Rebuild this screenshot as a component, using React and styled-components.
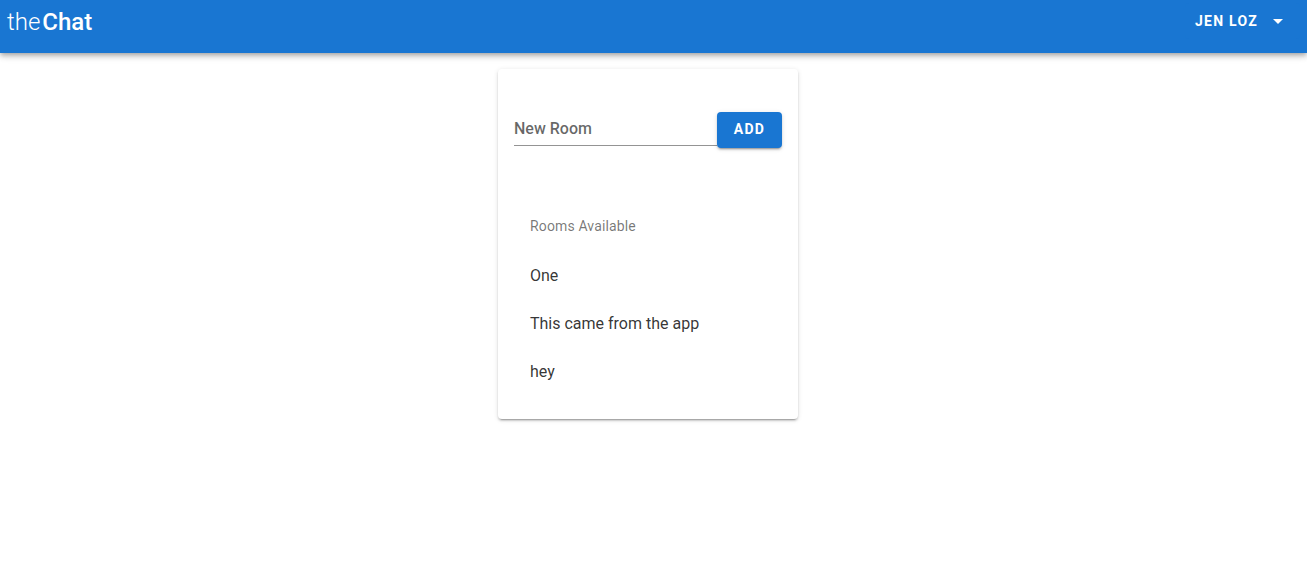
import React, { useState } from "react";
import styled, { createGlobalStyle } from "styled-components";

const GlobalStyle = createGlobalStyle`
  *, *::before, *::after { box-sizing: border-box; }
  body {
    margin: 0;
    background: #fff;
    color: rgba(0, 0, 0, 0.8);
    font: 400 16px/24px Roboto, "Liberation Sans", sans-serif;
  }
  button, input { font-family: inherit; }
`;

const raised = `
  box-shadow: 0 3px 1px -2px rgba(0, 0, 0, 0.2), 0 2px 2px rgba(0, 0, 0, 0.14),
    0 1px 5px rgba(0, 0, 0, 0.12);
`;

const AppBar = styled.header`
  display: flex;
  justify-content: space-between;
  align-items: flex-start;
  height: 53px;
  padding: 4px 7px;
  background: #1976d2;
  color: #fff;
  box-shadow: 0 2px 4px -1px rgba(0, 0, 0, 0.2), 0 4px 5px rgba(0, 0, 0, 0.14),
    0 1px 10px rgba(0, 0, 0, 0.12);
`;

const Brand = styled.a`
  display: flex;
  gap: 2px;
  color: inherit;
  text-decoration: none;
  font-size: 24px;
  line-height: 36px;
`;

const BrandPart = styled.span`
  font-weight: ${({ $strong }) => ($strong ? 500 : 300)};
`;

const Button = styled.button`
  display: inline-flex;
  align-items: center;
  justify-content: center;
  height: 36px;
  padding: 0 16px;
  border: 0;
  border-radius: 4px;
  background: #1976d2;
  color: #fff;
  font-size: 14px;
  font-weight: 700;
  line-height: 18px;
  letter-spacing: 0.09em;
  text-transform: uppercase;
  cursor: pointer;
`;

const UserButton = styled(Button)`
  gap: 8px;
  padding: 0 10px;
  margin-top: -1px;
`;

const AddButton = styled(Button)`
  min-width: 65px;
  padding-bottom: 2px;
  ${raised}
`;

const Main = styled.main`
  display: flex;
  justify-content: center;
  padding: 16px 11px 16px 0;
`;

const Card = styled.section`
  width: 300px;
  padding: 43px 16px 23px;
  border-radius: 4px;
  background: #fff;
  ${raised}
`;

const RoomForm = styled.form`
  display: flex;
  align-items: flex-start;
`;

const RoomInput = styled.input`
  flex: 1;
  min-width: 0;
  height: 34px;
  padding: 0;
  border: 0;
  border-bottom: 1px solid #949494;
  border-radius: 0;
  background: transparent;
  color: inherit;
  font-size: 16px;
  font-weight: 500;
  outline: 0;
  &::placeholder { color: rgba(0, 0, 0, 0.6); opacity: 1; }
`;

const Rooms = styled.div`
  padding: 54px 16px 0;
`;

const Subheader = styled.h2`
  margin: 0 0 2px;
  color: rgba(0, 0, 0, 0.54);
  font-size: 14px;
  font-weight: 400;
  line-height: 48px;
  letter-spacing: 0.01em;
`;

const RoomList = styled.ul`
  margin: 0;
  padding: 0;
  list-style: none;
`;

const RoomLink = styled.a`
  display: block;
  color: inherit;
  text-decoration: none;
  line-height: 48px;
`;

export default function App() {
  const [rooms, setRooms] = useState(["One", "This came from the app", "hey"]);
  const [name, setName] = useState("");

  const addRoom = (event) => {
    event.preventDefault();
    if (!name.trim()) return;
    setRooms([...rooms, name.trim()]);
    setName("");
  };

  return (
    <>
      <GlobalStyle />
      <AppBar>
        <Brand href="#home">
          <BrandPart>the</BrandPart>
          <BrandPart $strong>Chat</BrandPart>
        </Brand>
        <UserButton type="button" aria-haspopup="menu">
          Jen Loz
          <svg width="24" height="24" viewBox="0 0 24 24" fill="currentColor" aria-hidden="true">
            <path d="M7 10l5 5 5-5z" />
          </svg>
        </UserButton>
      </AppBar>
      <Main>
        <Card>
          <RoomForm onSubmit={addRoom}>
            <RoomInput
              aria-label="New Room"
              placeholder="New Room"
              value={name}
              onChange={(event) => setName(event.target.value)}
            />
            <AddButton type="submit">Add</AddButton>
          </RoomForm>
          <Rooms>
            <Subheader>Rooms Available</Subheader>
            <RoomList>
              {rooms.map((room, index) => (
                <li key={index}>
                  <RoomLink href={`#room-${index + 1}`}>{room}</RoomLink>
                </li>
              ))}
            </RoomList>
          </Rooms>
        </Card>
      </Main>
    </>
  );
}
